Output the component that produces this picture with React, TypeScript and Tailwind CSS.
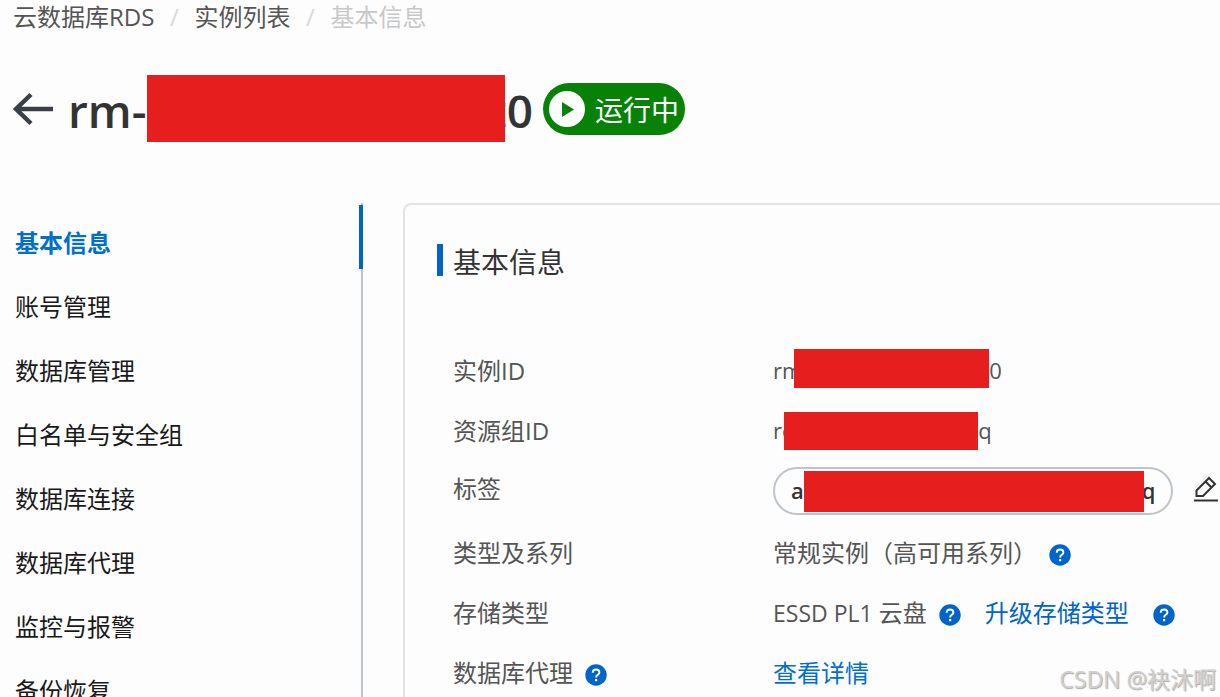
import React from 'react';

const navItems = [
  '基本信息',
  '账号管理',
  '数据库管理',
  '白名单与安全组',
  '数据库连接',
  '数据库代理',
  '监控与报警',
  '备份恢复',
];

function HelpIcon({ className = '' }: { className?: string }) {
  return (
    <button type="button" aria-label="帮助" className={`mt-1 shrink-0 ${className}`}>
      <svg viewBox="0 0 22 22" className="h-[22px] w-[22px]" fill="none">
        <circle cx="11" cy="11" r="10.7" fill="#0064c8" />
        <path d="M7.700 8.800c0-2 1.400-3.300 3.400-3.300s3.300 1.200 3.300 2.900c0 2.400-3.300 2.500-3.300 5" stroke="#fff" strokeWidth="1.9" />
        <rect x="10" y="15" width="2.200" height="2.200" fill="#fff" />
      </svg>
    </button>
  );
}

function Row({
  label,
  help = false,
  className = 'h-15',
  children,
}: {
  label: string;
  help?: boolean;
  className?: string;
  children: React.ReactNode;
}) {
  return (
    <div className={`flex items-center ${className}`}>
      <dt className="flex w-80 shrink-0 items-center">
        {label}
        {help && <HelpIcon className="ml-3" />}
      </dt>
      <dd className="flex items-center whitespace-nowrap">{children}</dd>
    </div>
  );
}

function Header() {
  return (
    <header>
      <nav aria-label="breadcrumb" className="flex h-[34px] items-center pl-[13px]">
        <a href="#rds">云数据库RDS</a>
        <span className="w-10 text-center text-[#d8d8d8]">/</span>
        <a href="#list">实例列表</a>
        <span className="w-10 text-center text-[#d8d8d8]">/</span>
        <span className="text-[#c8c8c8]">基本信息</span>
      </nav>
      <div className="mt-[41px] flex h-[67px] items-center pl-3">
        <button type="button" aria-label="返回">
          <svg viewBox="0 0 42 34" className="h-[34px] w-[42px]" fill="none" stroke="#3a4047" strokeWidth="4.5">
            <path d="M41 17H4M19 2.500 4 17l15 14.500" />
          </svg>
        </button>
        <h1 className="ml-3.5 flex items-center text-[46px] leading-[67px] font-semibold text-[#333]">
          <span className="pt-1">rm-</span>
          <span className="relative z-10 h-[67px] w-[358px] bg-[#e61e1e]" />
          <span className="-ml-4 pt-1">t0</span>
        </h1>
        <span className="ml-2.5 flex h-[52px] items-center rounded-full bg-[#078207] px-1.5 text-[28px] text-white">
          <svg viewBox="0 0 36 36" className="mr-2.5 h-9 w-9">
            <circle cx="18" cy="18" r="18" fill="#fff" />
            <path d="M13 11v15l12-7.500z" fill="#078207" />
          </svg>
          <span className="pt-1">运行中</span>
        </span>
      </div>
    </header>
  );
}

function Sidebar() {
  return (
    <aside className="w-[363px] shrink-0 border-r-2 border-[#bfc4cc]">
      <ul className="pt-0.5 text-[#1a1a1a]">
        {navItems.map((item, i) => (
          <li key={item} className="relative h-16">
            <a
              href={`#nav-${i}`}
              className={`flex h-16 items-center pt-3 pl-[15px] ${i === 0 ? 'font-bold text-[#0070cc]' : ''}`}
            >
              {item}
            </a>
            {i === 0 && <span className="absolute top-0 -right-0.5 h-16 w-1 bg-[#0064c8]" />}
          </li>
        ))}
      </ul>
    </aside>
  );
}

function BasicInfo() {
  return (
    <section className="ml-10 flex-1 rounded-tl-lg border-t-2 border-l-2 border-[#e3e3e3] pl-8">
      <h2 className="mt-[39px] flex h-8 items-center text-[28px] text-[#333]">
        <span className="mr-2.5 h-8 w-1.5 bg-[#0064c8]" />
        <span className="mt-1.5">基本信息</span>
      </h2>
      <dl className="mt-[65px] pl-4">
        <Row label="实例ID">
          <span className="text-[22px]">rm</span>
          <span className="relative z-10 -mt-1.5 -ml-2 h-[39px] w-[195px] bg-[#e61e1e]" />
          <span className="text-[22px]">0</span>
        </Row>
        <Row label="资源组ID">
          <span className="text-[22px]">re</span>
          <span className="relative z-10 -ml-2.5 h-[38px] w-[194px] bg-[#e61e1e]" />
          <span className="text-[22px]">q</span>
        </Row>
        <Row label="标签" className="h-[62px] pb-1.5">
          <span className="mt-1 flex h-12 items-center rounded-full border-2 border-[#bfc4cc] px-4 text-[22px] font-semibold text-[#333]">
            a
            <span className="relative z-10 h-[41px] w-[340px] bg-[#e61e1e]" />
            <span className="-ml-0.5">q</span>
          </span>
          <button type="button" aria-label="编辑" className="ml-5 text-[#333]">
            <svg viewBox="0 0 26 26" className="h-[26px] w-[26px]" fill="none" stroke="currentColor" strokeWidth="2">
              <path d="M1 24.500h24M3.500 20v-5.500L16 2l6 6-12 12zM12.500 5.500l6 6" />
            </svg>
          </button>
        </Row>
        <Row label="类型及系列">
          常规实例（高可用系列）
          <HelpIcon className="ml-3" />
        </Row>
        <Row label="存储类型">
          <span className="mr-1.5 text-[23px]">ESSD PL1</span>
          云盘
          <HelpIcon className="ml-3" />
          <a href="#upgrade" className="ml-6 text-[#0064c8]">
            升级存储类型
          </a>
          <HelpIcon className="ml-6" />
        </Row>
        <Row label="数据库代理" help>
          <a href="#proxy" className="text-[#0070cc]">
            查看详情
          </a>
        </Row>
      </dl>
    </section>
  );
}

export default function App() {
  return (
    <div className="relative flex h-screen flex-col overflow-hidden bg-[#fdfdfd] font-['Open_Sans','Noto_Sans_CJK_SC',sans-serif] text-2xl text-[#555]">
      <Header />
      <main className="mt-[61px] flex flex-1">
        <Sidebar />
        <BasicInfo />
      </main>
      <div className="absolute right-1 bottom-0.5 text-[23px] text-[#d0d0d0] [text-shadow:1px_1px_1px_#aaa]">
        CSDN @袂沐啊
      </div>
    </div>
  );
}
